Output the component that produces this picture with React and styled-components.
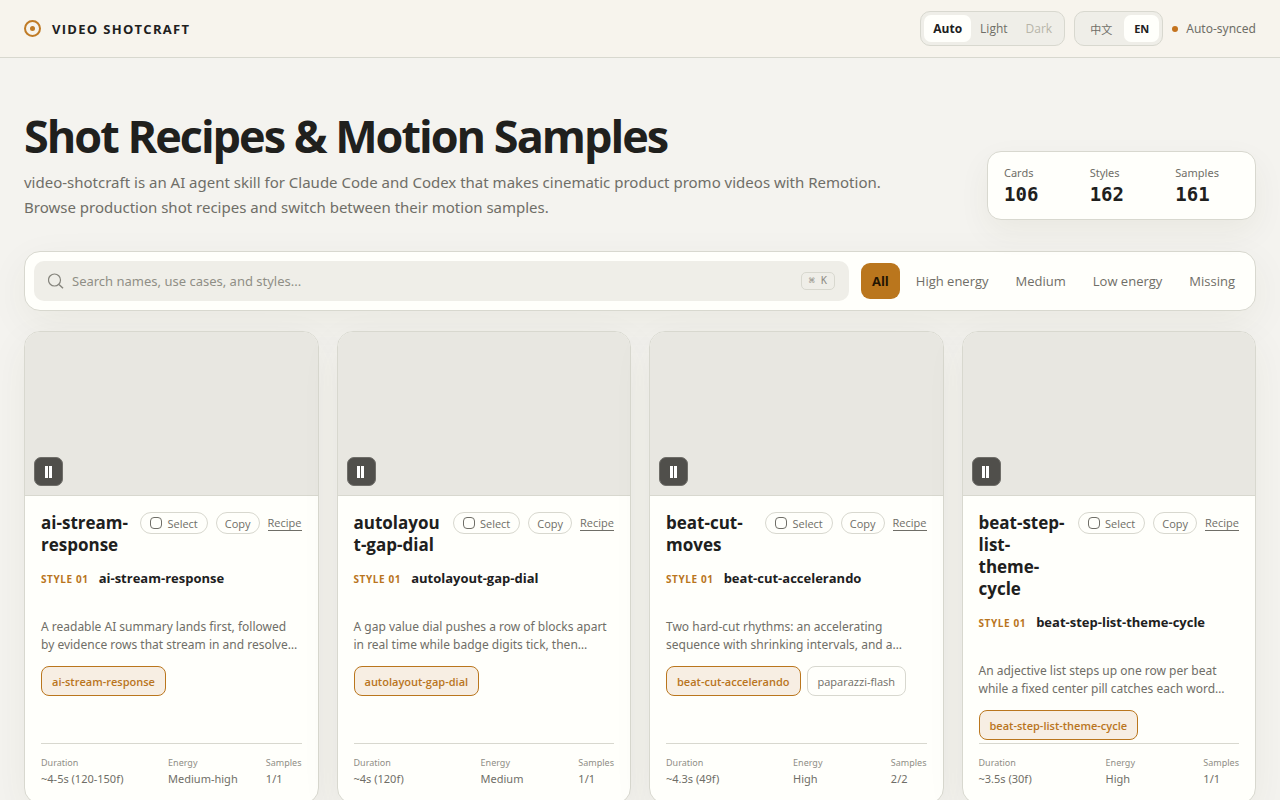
import React, { useState } from 'react';
import styled, { createGlobalStyle } from 'styled-components';

const GlobalStyle = createGlobalStyle`
  * {
    box-sizing: border-box;
  }

  body {
    margin: 0;
    background: #f4f3ef;
    color: #20201d;
    font-family: "Noto Sans", "Noto Sans CJK SC", sans-serif;
    font-size: 13px;
  }

  button, input {
    font-family: inherit;
  }
`;

const display = '"Open Sans", sans-serif';

const Header = styled.header`
  display: flex;
  align-items: center;
  gap: 9px;
  height: 58px;
  padding: 0 24px;
  background: #f7f4ed;
  border-bottom: 1px solid #d8d8cf;
`;

const Brand = styled.div`
  display: flex;
  align-items: center;
  gap: 11px;
  margin-right: auto;
  font-family: ${display};
  font-size: 13px;
  font-weight: 700;
  letter-spacing: 0.1em;
`;

const Segment = styled.div`
  display: flex;
  height: 35px;
  padding: 3px;
  background: #efeee8;
  border: 1px solid #d8d8cf;
  border-radius: 10px;
`;

const SegmentButton = styled.button`
  padding: 0 9px;
  border: 0;
  border-radius: 7px;
  background: ${(props) => (props.$active ? '#fffffb' : 'transparent')};
  color: ${(props) => (props.$active ? '#20201d' : '#6f6e67')};
  font-family: "Open Sans", "Noto Sans CJK SC", sans-serif;
  font-size: 12px;
  font-weight: ${(props) => (props.$active ? 700 : 400)};
  cursor: pointer;

  &:disabled {
    color: #b7b5a8;
    cursor: default;
  }
`;

const LangButton = styled(SegmentButton)`
  padding: 0 ${(props) => (props.$active ? 10 : 12)}px;
  font-size: 11px;
`;

const Sync = styled.div`
  display: flex;
  align-items: center;
  gap: 8px;
  color: #6f6e67;
  font-size: 12px;

  &::before {
    content: "";
    width: 6px;
    height: 6px;
    border-radius: 50%;
    background: #c4731e;
  }
`;

const Main = styled.main`
  padding: 50px 24px 48px;
`;

const Hero = styled.section`
  display: flex;
  align-items: flex-end;
  justify-content: space-between;
  gap: 32px;
  margin-bottom: 31px;
`;

const Title = styled.h1`
  margin: 0 0 6px;
  font-family: ${display};
  font-size: 45px;
  font-weight: 700;
  line-height: 56px;
  letter-spacing: -2px;
`;

const Intro = styled.p`
  max-width: 880px;
  margin: 0;
  color: #6f6e67;
  font-size: 15px;
  line-height: 25px;
`;

const Stats = styled.dl`
  display: grid;
  grid-template-columns: repeat(3, 1fr);
  flex: 0 0 269px;
  gap: 22px;
  margin: 0;
  padding: 12px 16px;
  background: #fffffb;
  border: 1px solid #d8d8cf;
  border-radius: 14px;
  box-shadow: 0 12px 32px rgba(70, 70, 20, 0.06);

  dt {
    color: #6f6e67;
    font-size: 11px;
    line-height: 18px;
  }

  dd {
    margin: 0;
    font-family: "DejaVu Sans Mono", monospace;
    font-size: 19px;
    font-weight: 700;
    line-height: 25px;
  }
`;

const Toolbar = styled.section`
  display: flex;
  align-items: center;
  gap: 12px;
  margin-bottom: 20px;
  padding: 9px;
  background: #fffffb;
  border: 1px solid #d8d8cf;
  border-radius: 16px;
  box-shadow: 0 12px 40px rgba(70, 70, 20, 0.06);
`;

const SearchBox = styled.label`
  display: flex;
  flex: 1;
  align-items: center;
  gap: 8px;
  height: 40px;
  padding: 0 14px;
  background: #efeee8;
  border-radius: 10px;
  color: #85847c;

  input {
    flex: 1;
    min-width: 0;
    padding: 0;
    border: 0;
    outline: 0;
    background: transparent;
    color: #20201d;
    font-size: 13px;
  }

  input::placeholder {
    color: #8f8e86;
    opacity: 1;
  }
`;

const Shortcut = styled.kbd`
  padding: 0 7px;
  border: 1px solid #d8d8cf;
  border-radius: 5px;
  color: #8f8e86;
  font-family: "DejaVu Sans Mono", monospace;
  font-size: 10px;
  line-height: 16px;
`;

const Filters = styled.div`
  display: flex;
  gap: 5px;
`;

const FilterButton = styled.button`
  height: 36px;
  padding: 0 11px;
  border: 0;
  border-radius: 9px;
  background: ${(props) => (props.$active ? '#ba761d' : 'transparent')};
  color: ${(props) => (props.$active ? '#241502' : '#6f6e67')};
  font-family: ${display};
  font-size: 13px;
  font-weight: ${(props) => (props.$active ? 700 : 400)};
  cursor: pointer;
`;

const CardGrid = styled.section`
  display: grid;
  grid-template-columns: repeat(auto-fill, minmax(280px, 1fr));
  gap: 18px;
`;

const CardBox = styled.article`
  display: flex;
  flex-direction: column;
  overflow: hidden;
  background: #fffffb;
  border: 1px solid #d8d8cf;
  border-radius: 16px;
  box-shadow: 0 12px 40px rgba(70, 70, 20, 0.06);
`;

const Preview = styled.div`
  display: flex;
  align-items: flex-end;
  height: 164px;
  padding: 9px;
  background: #e8e7e1;
  border-bottom: 1px solid #d8d8cf;
`;

const PauseButton = styled.button`
  display: grid;
  place-items: center;
  width: 29px;
  height: 29px;
  padding: 0;
  background: #504f4b;
  border: 1px solid #6f6e69;
  border-radius: 7px;
  cursor: pointer;
`;

const CardBody = styled.div`
  display: flex;
  flex: 1;
  flex-direction: column;
  padding: 16px;
`;

const CardHead = styled.div`
  display: flex;
  align-items: flex-start;
  gap: 10px;
`;

const CardTitle = styled.h2`
  flex: 1;
  min-width: 0;
  margin: 0;
  font-family: ${display};
  font-size: 17px;
  font-weight: 700;
  line-height: 22px;
  overflow-wrap: anywhere;
`;

const Actions = styled.div`
  display: flex;
  align-items: center;
  gap: 8px;
  color: #6f6e67;
  font-family: ${display};
  font-size: 11px;
`;

const SelectLabel = styled.label`
  display: flex;
  align-items: center;
  gap: 5px;
  height: 22px;
  padding: 0 9px;
  border: 1px solid #d8d8cf;
  border-radius: 11px;
  cursor: pointer;

  input {
    width: 12px;
    height: 12px;
    margin: 0;
    appearance: none;
    border: 1px solid #6f6e67;
    border-radius: 4px;
  }

  input:checked {
    background: #ba761d;
    border-color: #ba761d;
  }
`;

const CopyButton = styled.button`
  height: 22px;
  padding: 0 8px;
  border: 1px solid #d8d8cf;
  border-radius: 11px;
  background: transparent;
  color: inherit;
  font-size: 11px;
  cursor: pointer;
`;

const RecipeLink = styled.a`
  border-bottom: 1px solid #6f6e67;
  color: inherit;
  line-height: 15px;
  text-decoration: none;
`;

const StyleRow = styled.div`
  display: flex;
  align-items: baseline;
  gap: 10px;
  min-height: 40px;
  margin-top: 13px;
  font-family: ${display};
  line-height: 18px;

  span {
    color: #b9751d;
    font-size: 10px;
    font-weight: 700;
    letter-spacing: 0.06em;
  }

  strong {
    font-size: 13px;
    font-weight: 700;
  }
`;

const Description = styled.p`
  margin: 9px 0 12px;
  padding-right: 4px;
  color: #6f6e67;
  font-size: 12px;
  line-height: 18px;
`;

const Chips = styled.div`
  display: flex;
  flex-wrap: wrap;
  gap: 6px;
  margin-bottom: 3px;
`;

const Chip = styled.button`
  height: 30px;
  padding: 0 10px;
  border: 1px solid ${(props) => (props.$active ? '#ba761d' : '#d8d8cf')};
  border-radius: 8px;
  background: ${(props) => (props.$active ? '#f7eee3' : 'transparent')};
  color: ${(props) => (props.$active ? '#b9751d' : '#6f6e67')};
  font-family: ${display};
  font-size: 11px;
  font-weight: ${(props) => (props.$active ? 600 : 400)};
  cursor: pointer;
`;

const Meta = styled.dl`
  display: grid;
  grid-template-columns: 1.3fr 1fr auto;
  margin: auto 0 0;
  padding-top: 11px;
  border-top: 1px solid #d8d8cf;

  dt {
    color: #8f8e86;
    font-size: 9px;
    line-height: 16px;
  }

  dd {
    margin: 0;
    color: #6f6e67;
    font-size: 11px;
    line-height: 16px;
  }
`;

const BrandIcon = () => (
  <svg width="17" height="17" viewBox="0 0 17 17" fill="none" aria-hidden="true">
    <circle cx="8.5" cy="8.5" r="7.5" stroke="#c07b26" strokeWidth="2" />
    <circle cx="8.5" cy="8.5" r="2.5" fill="#c07b26" />
  </svg>
);

const SearchIcon = () => (
  <svg width="16" height="16" viewBox="0 0 16 16" fill="none" stroke="currentColor" aria-hidden="true">
    <circle cx="6.5" cy="7" r="6" strokeWidth="1.2" />
    <path d="M11 11.5l4 3.8" strokeWidth="1.4" />
  </svg>
);

const PauseIcon = () => (
  <svg width="8" height="12" viewBox="0 0 8 12" fill="#fff" aria-hidden="true">
    <path d="M0 0h3v12H0zM4 0h3v12H4z" />
  </svg>
);

const filters = ['All', 'High energy', 'Medium', 'Low energy', 'Missing'];

const cards = [
  {
    name: 'ai-stream-response',
    text: 'A readable AI summary lands first, followed by evidence rows that stream in and resolve…',
    styles: ['ai-stream-response'],
    duration: '~4-5s (120-150f)',
    energy: 'Medium-high',
    samples: '1/1',
  },
  {
    name: 'autolayout-gap-dial',
    text: 'A gap value dial pushes a row of blocks apart in real time while badge digits tick, then…',
    styles: ['autolayout-gap-dial'],
    duration: '~4s (120f)',
    energy: 'Medium',
    samples: '1/1',
  },
  {
    name: 'beat-cut-moves',
    text: 'Two hard-cut rhythms: an accelerating sequence with shrinking intervals, and a…',
    styles: ['beat-cut-accelerando', 'paparazzi-flash'],
    duration: '~4.3s (49f)',
    energy: 'High',
    samples: '2/2',
  },
  {
    name: 'beat-step-list-theme-cycle',
    text: 'An adjective list steps up one row per beat while a fixed center pill catches each word…',
    styles: ['beat-step-list-theme-cycle'],
    duration: '~3.5s (30f)',
    energy: 'High',
    samples: '1/1',
  },
];

const RecipeCard = ({ card }) => {
  const [current, setCurrent] = useState(0);

  return (
    <CardBox>
      <Preview>
        <PauseButton type="button" aria-label="Pause">
          <PauseIcon />
        </PauseButton>
      </Preview>
      <CardBody>
        <CardHead>
          <CardTitle>{card.name}</CardTitle>
          <Actions>
            <SelectLabel>
              <input type="checkbox" />
              Select
            </SelectLabel>
            <CopyButton type="button">Copy</CopyButton>
            <RecipeLink href="#recipe">Recipe</RecipeLink>
          </Actions>
        </CardHead>
        <StyleRow>
          <span>STYLE 0{current + 1}</span>
          <strong>{card.styles[current]}</strong>
        </StyleRow>
        <Description>{card.text}</Description>
        <Chips>
          {card.styles.map((style, i) => (
            <Chip key={style} type="button" $active={i === current} onClick={() => setCurrent(i)}>
              {style}
            </Chip>
          ))}
        </Chips>
        <Meta>
          <div>
            <dt>Duration</dt>
            <dd>{card.duration}</dd>
          </div>
          <div>
            <dt>Energy</dt>
            <dd>{card.energy}</dd>
          </div>
          <div>
            <dt>Samples</dt>
            <dd>{card.samples}</dd>
          </div>
        </Meta>
      </CardBody>
    </CardBox>
  );
};

const App = () => {
  const [filter, setFilter] = useState('All');

  return (
    <>
      <GlobalStyle />
      <Header>
        <Brand>
          <BrandIcon />
          VIDEO SHOTCRAFT
        </Brand>
        <Segment>
          <SegmentButton type="button" $active>Auto</SegmentButton>
          <SegmentButton type="button">Light</SegmentButton>
          <SegmentButton type="button" disabled>Dark</SegmentButton>
        </Segment>
        <Segment>
          <LangButton type="button">中文</LangButton>
          <LangButton type="button" $active>EN</LangButton>
        </Segment>
        <Sync>Auto-synced</Sync>
      </Header>
      <Main>
        <Hero>
          <div>
            <Title>Shot Recipes &amp; Motion Samples</Title>
            <Intro>
              video-shotcraft is an AI agent skill for Claude Code and Codex that makes cinematic product promo videos
              with Remotion. Browse production shot recipes and switch between their motion samples.
            </Intro>
          </div>
          <Stats>
            <div>
              <dt>Cards</dt>
              <dd>106</dd>
            </div>
            <div>
              <dt>Styles</dt>
              <dd>162</dd>
            </div>
            <div>
              <dt>Samples</dt>
              <dd>161</dd>
            </div>
          </Stats>
        </Hero>
        <Toolbar>
          <SearchBox>
            <SearchIcon />
            <input type="text" aria-label="Search" placeholder="Search names, use cases, and styles..." />
            <Shortcut>⌘ K</Shortcut>
          </SearchBox>
          <Filters>
            {filters.map((name) => (
              <FilterButton key={name} type="button" $active={name === filter} onClick={() => setFilter(name)}>
                {name}
              </FilterButton>
            ))}
          </Filters>
        </Toolbar>
        <CardGrid>
          {cards.map((card) => (
            <RecipeCard key={card.name} card={card} />
          ))}
        </CardGrid>
      </Main>
    </>
  );
};

export default App;
